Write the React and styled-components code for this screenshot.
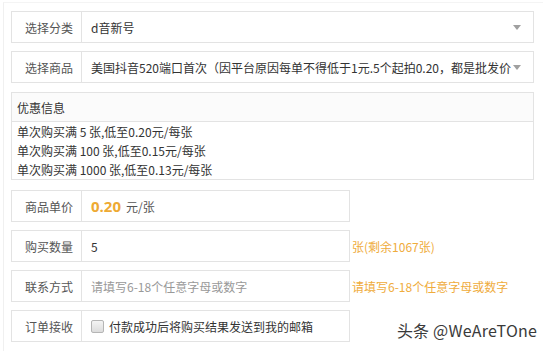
import styled, { createGlobalStyle } from 'styled-components';

const GlobalStyle = createGlobalStyle`
  html, body {
    margin: 0;
    padding: 0;
    background: #fff;
  }
  body {
    font-family: "Noto Sans CJK SC", "Noto Sans", sans-serif;
    font-size: 12px;
    color: #333;
  }
`;

const Page = styled.div`
  position: relative;
  width: 548px;
  height: 351px;
  box-sizing: border-box;
  overflow: hidden;
`;

const Panel = styled.div`
  margin: 2px 0 0 3px;
  width: 540px;
  height: 349px;
  box-sizing: border-box;
  border-left: 1px solid #f0f0f0;
  border-top: 1px solid #f4f4f4;
  padding: 8px 0 0 7px;
  display: flex;
  flex-direction: column;
  gap: 8px;
`;

const FieldRow = styled.div`
  display: flex;
  align-items: center;
  gap: 2px;
`;

const Field = styled.div`
  display: flex;
  width: ${(p) => (p.$short ? 339 : 523)}px;
  height: 32px;
  box-sizing: border-box;
  border: 1px solid #e3e3e3;
  background: #fff;
  flex-shrink: 0;
`;

const Label = styled.div`
  width: 70px;
  flex-shrink: 0;
  box-sizing: border-box;
  border-right: 1px solid #e3e3e3;
  display: flex;
  align-items: center;
  justify-content: flex-end;
  padding-right: 8px;
  color: #555;
  font-size: 12px;
`;

const Value = styled.div`
  position: relative;
  flex: 1;
  min-width: 0;
  display: flex;
  align-items: center;
  padding-left: 9px;
  color: ${(p) => (p.$placeholder ? '#999' : '#333')};
  white-space: nowrap;
`;

const Caret = styled.span`
  position: absolute;
  right: 12px;
  top: 13px;
  width: 0;
  height: 0;
  border-left: 4px solid transparent;
  border-right: 4px solid transparent;
  border-top: 5px solid #a0a0a0;
`;

const Hint = styled.span`
  color: #efac3c;
  font-size: 12px;
  white-space: nowrap;
`;

const Price = styled.b`
  color: #eeaa33;
  font-size: 15px;
  font-weight: 700;
  margin-right: 5px;
  font-family: "Open Sans", "Noto Sans", sans-serif;
`;

const Unit = styled.span`
  color: #555;
`;

const OfferBox = styled.div`
  width: 523px;
  box-sizing: border-box;
  border: 1px solid #e3e3e3;
  margin: 1px 0 2px;
`;

const OfferHead = styled.div`
  height: 29px;
  box-sizing: border-box;
  border-bottom: 1px solid #e3e3e3;
  background: #fbfbfb;
  display: flex;
  align-items: center;
  padding-left: 5px;
  color: #333;
`;

const OfferLine = styled.div`
  height: 19px;
  line-height: 19px;
  padding-left: 5px;
  color: #333;
`;

const Check = styled.span`
  display: inline-block;
  width: 11px;
  height: 11px;
  border: 1px solid #b5b5b5;
  border-radius: 2px;
  background: linear-gradient(#f4f4f4, #dcdcdc);
  margin-right: 5px;
  flex-shrink: 0;
`;

const Watermark = styled.div`
  position: absolute;
  right: 11px;
  bottom: 9px;
  font-size: 16px;
  color: #3a3a3a;
  letter-spacing: 0.2px;
  text-shadow: 0 0 2px #fff;
`;

const offers = [
  '单次购买满 5 张,低至0.20元/每张',
  '单次购买满 100 张,低至0.15元/每张',
  '单次购买满 1000 张,低至0.13元/每张',
];

export default function App() {
  return (
    <Page>
      <GlobalStyle />
      <Panel>
        <FieldRow>
          <Field>
            <Label>选择分类</Label>
            <Value>
              d音新号
              <Caret />
            </Value>
          </Field>
        </FieldRow>
        <FieldRow>
          <Field>
            <Label>选择商品</Label>
            <Value>
              美国抖音520端口首次（因平台原因每单不得低于1元.5个起拍0.20，都是批发价
              <Caret />
            </Value>
          </Field>
        </FieldRow>
        <OfferBox>
          <OfferHead>优惠信息</OfferHead>
          {offers.map((o) => (
            <OfferLine key={o}>{o}</OfferLine>
          ))}
        </OfferBox>
        <FieldRow>
          <Field $short>
            <Label>商品单价</Label>
            <Value>
              <Price>0.20</Price>
              <Unit>元/张</Unit>
            </Value>
          </Field>
        </FieldRow>
        <FieldRow>
          <Field $short>
            <Label>购买数量</Label>
            <Value>5</Value>
          </Field>
          <Hint>张(剩余1067张)</Hint>
        </FieldRow>
        <FieldRow>
          <Field $short>
            <Label>联系方式</Label>
            <Value $placeholder>请填写6-18个任意字母或数字</Value>
          </Field>
          <Hint>请填写6-18个任意字母或数字</Hint>
        </FieldRow>
        <FieldRow>
          <Field $short>
            <Label>订单接收</Label>
            <Value>
              <Check />
              付款成功后将购买结果发送到我的邮箱
            </Value>
          </Field>
        </FieldRow>
      </Panel>
      <Watermark>头条 @WeAreTOne</Watermark>
    </Page>
  );
}
